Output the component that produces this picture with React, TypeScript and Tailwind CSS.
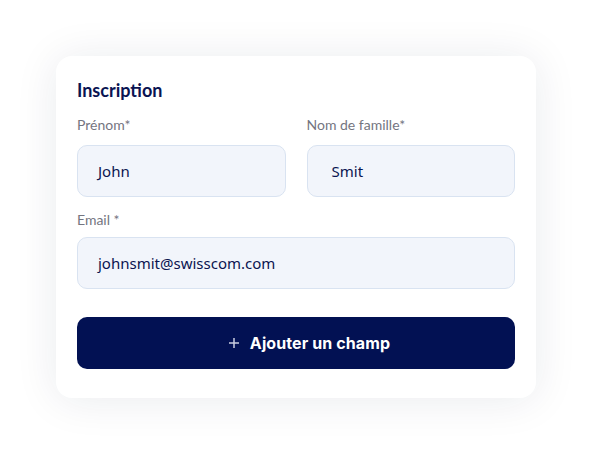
import React from 'react';

const Field = ({ label, value, pad = 'pl-5' }: { label: string; value: string; pad?: string }) => (
  <div className="flex flex-col">
    <label className="font-['Lato',sans-serif] text-[14px] leading-[14px] text-[#74757f]">{label}</label>
    <div
      className={`mt-[13px] flex h-[52px] items-center rounded-[10px] border border-[#d9e3f1] bg-[#f2f5fb] ${pad} text-[15px] text-[#0a1450]`}
    >
      {value}
    </div>
  </div>
);

export default function App() {
  return (
    <div className="min-h-screen w-full bg-white pl-14 pt-14 font-['Noto_Sans',sans-serif]">
      <div className="w-[480px] rounded-[16px] bg-white px-[21px] pb-[29px] pt-[24px] shadow-[0_2px_44px_rgba(20,30,70,0.09)]">
        <h1 className="font-['Lato',sans-serif] text-[18px] font-bold leading-[20px] text-[#0a1452]">Inscription</h1>

        <div className="mt-[18px] grid grid-cols-2 gap-[21px]">
          <Field label="Prénom*" value="John" />
          <Field label="Nom de famille*" value="Smit" pad="pl-[24px]" />
        </div>

        <div className="mt-[16px] flex flex-col">
          <label className="font-['Lato',sans-serif] text-[14px] leading-[14px] text-[#74757f]">Email *</label>
          <div className="mt-[10px] flex h-[52px] items-center rounded-[10px] border border-[#d9e3f1] bg-[#f2f5fb] pl-5 text-[15px] text-[#0a1450]">
            johnsmit@swisscom.com
          </div>
        </div>

        <button className="mt-[28px] flex h-[52px] w-full items-center justify-center gap-[11px] rounded-[10px] bg-[#021153] pl-[27px] text-white">
          <svg width="10" height="10" viewBox="0 0 10 10" fill="none" stroke="#c9cde0" strokeWidth="1.5">
            <path d="M5 0v10M0 5h10" />
          </svg>
          <span className="font-['Inter',sans-serif] text-[16px] font-bold tracking-[0.1px]">Ajouter un champ</span>
        </button>
      </div>
    </div>
  );
}
